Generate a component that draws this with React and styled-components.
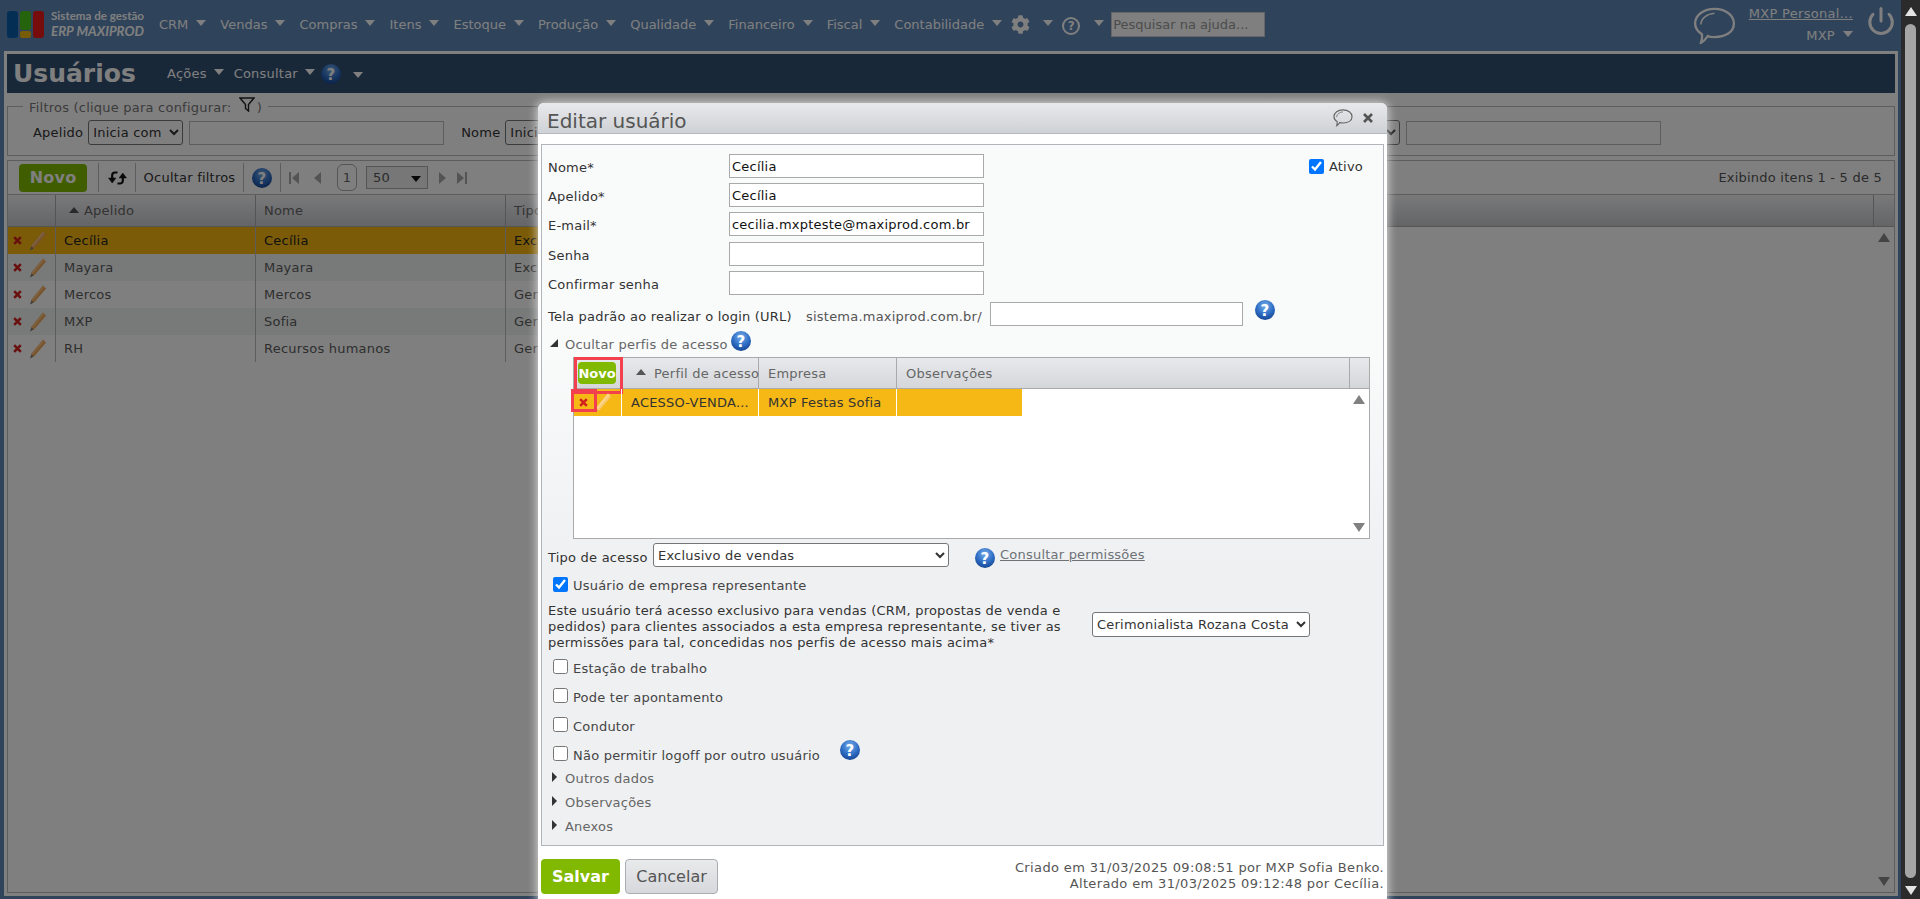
import React, { useId } from "react"
import styled, { createGlobalStyle } from "styled-components"
import { FaCog } from "react-icons/fa"
import { Power } from "lucide-react"

const GlobalStyle = createGlobalStyle`
   html, body {
      margin: 0;
      height: 100%;
      overflow: hidden;
   }
   body, input, select, button {
      font-family: "DejaVu Sans", Verdana, sans-serif;
      font-size: 13px;
      letter-spacing: inherit;
   }
   * {
      box-sizing: border-box;
   }
`

function HelpIcon() {
   const id = useId()
   return (
      <svg width="20" height="20" viewBox="0 0 20 20">
         <defs>
            <radialGradient id={id} cx="50%" cy="30%" r="75%">
               <stop offset="0%" stopColor="#79aeea" />
               <stop offset="55%" stopColor="#2f6fc6" />
               <stop offset="100%" stopColor="#123f8c" />
            </radialGradient>
         </defs>
         <circle cx="10" cy="10" r="10" fill={`url(#${id})`} />
         <text x="10" y="15.5" fontSize="15" fontWeight="bold" textAnchor="middle" fill="#fff" fontFamily="DejaVu Sans">?</text>
      </svg>
   )
}

function Pencil({ faded }) {
   return (
      <svg width="18" height="22" viewBox="0 0 18 22">
         <path d="M14 1.5 L17 4.5 L5.5 18 L2 19.5 L2.5 15.5 Z" fill={faded ? "#f9c870" : "#f0a552"} />
         <path d="M14 1.5 L15.5 3 L4 17 L2.5 15.5 Z" fill={faded ? "#fbd68a" : "#f6c084"} />
         <path d="M2.4 16.5 L4.600 18.4 L1 20.5 Z" fill={faded ? "#d9b25a" : "#777"} />
      </svg>
   )
}

function Cross() {
   return (
      <svg width="9" height="9" viewBox="0 0 9 9">
         <path d="M1.2 1.2 L7.8 7.8 M7.8 1.2 L1.2 7.8" stroke="#d2201f" strokeWidth="2.6" />
      </svg>
   )
}

function Refresh() {
   return (
      <svg width="19" height="16" viewBox="0 0 19 16" fill="none" stroke="#111" strokeWidth="2.2">
         <path d="M9.500 2.500 H7 A2.800 2.800 0 0 0 4.200 5.300 V10" />
         <path d="M0.500 8 L4.200 13 L7.900 8 Z" fill="#111" strokeWidth="0.5" />
         <path d="M9.500 13.500 H12 A2.800 2.800 0 0 0 14.800 10.700 V6" />
         <path d="M11.100 8 L14.800 3 L18.500 8 Z" fill="#111" strokeWidth="0.5" />
      </svg>
   )
}

function Funnel() {
   return (
      <svg width="16" height="15" viewBox="0 0 16 15" fill="none" stroke="#222" strokeWidth="1.4">
         <path d="M1 1 H15 L9.500 7.500 V14 L6.500 11.500 V7.500 Z" />
      </svg>
   )
}

function Bubble({ size, color, sw }) {
   return (
      <svg width={size} height={size * 0.88} viewBox="0 0 44 39" fill="none" stroke={color} strokeWidth={sw}>
         <path d="M22 2 C33 2 42 8 42 17 C42 26 33 31 22 31 C19 31 17 31 15 30 C13 33 10 36 8 37 C9 34 9.500 31 9 28 C4.500 25 2 21 2 17 C2 8 11 2 22 2 Z" />
         <path d="M8 18 C8 12 14 7 22 6.500" strokeWidth={sw * 0.7} />
      </svg>
   )
}

function MainGridRow({ apelido, nome, tipo, selected, alt }) {
   return (
      <MainRow $selected={selected} $alt={alt}>
         <ActionCell>
            <Cross />
            <Pencil />
         </ActionCell>
         <MainCell>{apelido}</MainCell>
         <MainCell>{nome}</MainCell>
         <MainCell>{tipo}</MainCell>
      </MainRow>
   )
}

function CheckRow({ label, checked, help }) {
   return (
      <CheckLine>
         <input type="checkbox" defaultChecked={checked} />
         <span>{label}</span>
         {help && (
            <RowHelp>
               <HelpIcon />
            </RowHelp>
         )}
      </CheckLine>
   )
}

const navItems = ["CRM", "Vendas", "Compras", "Itens", "Estoque", "Produção", "Qualidade", "Financeiro", "Fiscal", "Contabilidade"]

export default function App() {
   return (
      <Page>
         <GlobalStyle />
         <Main>
            <TopNav>
               <Logo>
                  <LogoMark>
                     <LogoBar $color="#0b5cab" />
                     <LogoStack>
                        <LogoBar $color="#4cc71a" />
                        <LogoFoot />
                     </LogoStack>
                     <LogoBar $color="#ee1818" />
                  </LogoMark>
                  <LogoText>
                     <strong>Sistema de gestão</strong>
                     <em>ERP MAXIPROD</em>
                  </LogoText>
               </Logo>
               <NavMenu>
                  {navItems.map((item) => (
                     <NavItem key={item}>
                        {item}
                        <Caret />
                     </NavItem>
                  ))}
               </NavMenu>
               <NavIcons>
                  <FaCog size={19} color="#fff" />
                  <Caret />
                  <HelpOutline>?</HelpOutline>
                  <Caret />
               </NavIcons>
               <SearchBox defaultValue="Pesquisar na ajuda..." />
               <UserArea>
                  <Bubble size={43} color="#fff" sw={2.4} />
                  <UserBox>
                     <UserLink>MXP Personal...</UserLink>
                     <UserCompany>
                        MXP
                        <Caret />
                     </UserCompany>
                  </UserBox>
                  <PowerSlot>
                     <Power size={30} color="#fff" strokeWidth={2.4} />
                  </PowerSlot>
               </UserArea>
            </TopNav>

            <Frame>
               <TitleBar>
                  <Title>Usuários</Title>
                  <TitleMenu>
                     Ações
                     <Caret />
                  </TitleMenu>
                  <TitleMenu>
                     Consultar
                     <Caret />
                  </TitleMenu>
                  <HelpIcon />
                  <TitleCaret>
                     <Caret />
                  </TitleCaret>
               </TitleBar>

               <Filters>
                  <FilterLegend>
                     Filtros (clique para configurar: <Funnel />)
                  </FilterLegend>
                  <FilterGroup>
                     <FilterLabel>Apelido</FilterLabel>
                     <FilterSelect defaultValue="Inicia com">
                        <option>Inicia com</option>
                     </FilterSelect>
                     <FilterInput />
                  </FilterGroup>
                  <FilterGroup $offset={17}>
                     <FilterLabel>Nome</FilterLabel>
                     <FilterSelect defaultValue="Inicia com">
                        <option>Inicia com</option>
                     </FilterSelect>
                     <FilterInput />
                  </FilterGroup>
                  <FilterGroup $offset={444}>
                     <FilterSelect defaultValue="Inicia com">
                        <option>Inicia com</option>
                     </FilterSelect>
                     <FilterInput />
                  </FilterGroup>
               </Filters>

               <Toolbar>
                  <NewButton>Novo</NewButton>
                  <ToolCell $width={37}>
                     <Refresh />
                  </ToolCell>
                  <ToolCell $width={108}>Ocultar filtros</ToolCell>
                  <ToolCell $width={37}>
                     <HelpIcon />
                  </ToolCell>
                  <Pager>
                     <PagerIcon viewBox="0 0 10 12">
                        <path d="M0 0 H2 V12 H0 Z M10 0 V12 L3 6 Z" />
                     </PagerIcon>
                     <PagerIcon viewBox="0 0 10 12">
                        <path d="M8 0 V12 L1 6 Z" />
                     </PagerIcon>
                     <PageBox>1</PageBox>
                     <PageSize>
                        50
                        <PageSizeCaret />
                     </PageSize>
                     <PagerIcon $tight viewBox="0 0 10 12">
                        <path d="M2 0 V12 L9 6 Z" />
                     </PagerIcon>
                     <PagerIcon viewBox="0 0 10 12">
                        <path d="M0 0 V12 L7 6 Z M8 0 H10 V12 H8 Z" />
                     </PagerIcon>
                  </Pager>
                  <ItemCount>Exibindo itens 1 - 5 de 5</ItemCount>
               </Toolbar>

               <MainGrid>
                  <MainHeader>
                     <HeaderCell />
                     <HeaderCell $sorted>
                        <SortUp />
                        Apelido
                     </HeaderCell>
                     <HeaderCell>Nome</HeaderCell>
                     <HeaderCell>Tipo de acesso</HeaderCell>
                     <HeaderCell />
                  </MainHeader>
                  <MainBody>
                     <MainRows>
                        <MainGridRow apelido="Cecília" nome="Cecília" tipo="Exclusivo de vendas" selected />
                        <MainGridRow apelido="Mayara" nome="Mayara" tipo="Exclusivo de vendas" alt />
                        <MainGridRow apelido="Mercos" nome="Mercos" tipo="Gerente" />
                        <MainGridRow apelido="MXP" nome="Sofia" tipo="Gerente" alt />
                        <MainGridRow apelido="RH" nome="Recursos humanos" tipo="Gerente" />
                     </MainRows>
                     <ScrollTrack>
                        <ArrowUp $color="#888" />
                        <ArrowDown $color="#888" />
                     </ScrollTrack>
                  </MainBody>
               </MainGrid>
            </Frame>
            <Overlay />
         </Main>

         <Scrollbar>
            <ArrowUp $color="#e4e4e4" />
            <Thumb />
            <ArrowDown $color="#e4e4e4" />
         </Scrollbar>

         <Modal>
            <ModalHeader>
               <ModalTitle>Editar usuário</ModalTitle>
               <ModalTools>
                  <Bubble size={20} color="#666" sw={2.6} />
                  <CloseGlyph viewBox="0 0 10 10">
                     <path d="M1 1 L9 9 M9 1 L1 9" />
                  </CloseGlyph>
               </ModalTools>
            </ModalHeader>

            <Panel>
               <FieldRow>
                  <FieldLabel>Nome*</FieldLabel>
                  <TextInput defaultValue="Cecília" />
                  <ActiveCheck>
                     <input type="checkbox" defaultChecked />
                     Ativo
                  </ActiveCheck>
               </FieldRow>
               <FieldRow>
                  <FieldLabel>Apelido*</FieldLabel>
                  <TextInput defaultValue="Cecília" />
               </FieldRow>
               <FieldRow $wide>
                  <FieldLabel>E-mail*</FieldLabel>
                  <TextInput defaultValue="cecilia.mxpteste@maxiprod.com.br" />
               </FieldRow>
               <FieldRow>
                  <FieldLabel>Senha</FieldLabel>
                  <TextInput />
               </FieldRow>
               <FieldRow>
                  <FieldLabel>Confirmar senha</FieldLabel>
                  <TextInput />
               </FieldRow>

               <UrlRow>
                  <UrlLabel>Tela padrão ao realizar o login (URL)</UrlLabel>
                  <UrlPrefix>sistema.maxiprod.com.br/</UrlPrefix>
                  <UrlInput />
                  <UrlHelp>
                     <HelpIcon />
                  </UrlHelp>
               </UrlRow>

               <SectionToggle>
                  <OpenTriangle />
                  <span>Ocultar perfis de acesso</span>
                  <SectionHelp>
                     <HelpIcon />
                  </SectionHelp>
               </SectionToggle>

               <SubGrid>
                  <SubHeader>
                     <SubHeaderCell>
                        <SmallNew>Novo</SmallNew>
                        <RedMark $left={0} $top={-1} $width={49} $height={37} />
                     </SubHeaderCell>
                     <SubHeaderCell $pad={14}>
                        <SortUp />
                        Perfil de acesso
                     </SubHeaderCell>
                     <SubHeaderCell $pad={9}>Empresa</SubHeaderCell>
                     <SubHeaderCell $pad={9}>Observações</SubHeaderCell>
                     <SubHeaderCell />
                  </SubHeader>
                  <SubBody>
                     <SubRows>
                        <SubRow>
                           <SubAction>
                              <Cross />
                              <Pencil faded />
                              <RedMark $left={-3} $top={0} $width={26} $height={23} />
                           </SubAction>
                           <SubCell>ACESSO-VENDA...</SubCell>
                           <SubCell>MXP Festas Sofia</SubCell>
                           <SubCell />
                        </SubRow>
                     </SubRows>
                     <ScrollTrack>
                        <ArrowUp $color="#808080" />
                        <ArrowDown $color="#808080" />
                     </ScrollTrack>
                  </SubBody>
               </SubGrid>

               <TipoRow>
                  <TipoLabel>Tipo de acesso</TipoLabel>
                  <TipoSelect defaultValue="Exclusivo de vendas">
                     <option>Exclusivo de vendas</option>
                  </TipoSelect>
                  <TipoHelp>
                     <HelpIcon />
                  </TipoHelp>
                  <PermLink>Consultar permissões</PermLink>
               </TipoRow>

               <RepresentRow>
                  <input type="checkbox" defaultChecked />
                  <span>Usuário de empresa representante</span>
               </RepresentRow>

               <RepresentBlock>
                  <RepresentText>
                     Este usuário terá acesso exclusivo para vendas (CRM, propostas de venda e pedidos) para clientes associados a esta empresa representante, se tiver as permissões para tal, concedidas nos perfis de acesso mais acima*
                  </RepresentText>
                  <RepresentSelect defaultValue="Cerimonialista Rozana Costa">
                     <option>Cerimonialista Rozana Costa</option>
                  </RepresentSelect>
               </RepresentBlock>

               <CheckList>
                  <CheckRow label="Estação de trabalho" />
                  <CheckRow label="Pode ter apontamento" />
                  <CheckRow label="Condutor" />
                  <CheckRow label="Não permitir logoff por outro usuário" help />
               </CheckList>

               <Collapsed>
                  <ClosedTriangle />
                  Outros dados
               </Collapsed>
               <Collapsed>
                  <ClosedTriangle />
                  Observações
               </Collapsed>
               <Collapsed>
                  <ClosedTriangle />
                  Anexos
               </Collapsed>
            </Panel>

            <ModalFooter>
               <SaveButton>Salvar</SaveButton>
               <CancelButton>Cancelar</CancelButton>
               <AuditText>
                  Criado em 31/03/2025 09:08:51 por MXP Sofia Benko.
                  <br />
                  Alterado em 31/03/2025 09:12:48 por Cecília.
               </AuditText>
            </ModalFooter>
         </Modal>
      </Page>
   )
}

const Page = styled.div`
   position: relative;
   display: flex;
   width: 100%;
   height: 899px;
   overflow: hidden;
   color: #333;
`
const Main = styled.div`
   position: relative;
   flex: 1;
   background: #5e86b6;
`
const Overlay = styled.div`
   position: absolute;
   inset: 0;
   background: rgba(0, 0, 0, 0.5);
`

/* top navigation */
const TopNav = styled.div`
   display: flex;
   align-items: center;
   height: 51px;
   padding: 0 0 2px 7px;
   color: #fff;
`
const Logo = styled.div`
   display: flex;
   align-items: center;
   gap: 7px;
   width: 152px;
`
const LogoMark = styled.div`
   display: flex;
   gap: 2px;
   height: 27px;
`
const LogoBar = styled.div`
   flex: 1;
   width: 11px;
   border-radius: 3px;
   background: ${(p) => p.$color};
`
const LogoStack = styled.div`
   display: flex;
   flex-direction: column;
   gap: 1px;
`
const LogoFoot = styled.div`
   height: 7px;
   border-radius: 2px;
   background: #f2b90f;
`
const LogoText = styled.div`
   display: flex;
   flex-direction: column;
   gap: 2px;
   margin-top: -3px;
   font-family: Lato, sans-serif;
   white-space: nowrap;
   strong {
      font-size: 11.6px;
      line-height: 13px;
   }
   em {
      font-size: 13.3px;
      line-height: 14px;
      font-weight: 700;
   }
`
const NavMenu = styled.div`
   display: flex;
   gap: 14px;
`
const NavItem = styled.div`
   display: flex;
   align-items: center;
   gap: 8px;
`
const Caret = styled.i`
   display: inline-block;
   width: 0;
   height: 0;
   margin-top: -4px;
   border-left: 5px solid transparent;
   border-right: 5px solid transparent;
   border-top: 6px solid currentColor;
`
const NavIcons = styled.div`
   display: flex;
   align-items: center;
   margin-left: 9px;
   gap: 13px;
   i {
      margin-right: -4px;
   }
   i:last-child {
      margin-left: 1px;
      margin-right: 0;
   }
`
const HelpOutline = styled.span`
   display: flex;
   align-items: center;
   justify-content: center;
   width: 18px;
   height: 18px;
   margin-top: 2px;
   border: 2px solid #fff;
   border-radius: 50%;
   font-size: 12px;
   font-weight: bold;
`
const SearchBox = styled.input`
   width: 154px;
   height: 25px;
   margin-left: 7px;
   padding: 0 1px;
   border: 1px solid #ccc;
   background: #fff;
   color: #999;
`
const UserArea = styled.div`
   display: flex;
   align-items: center;
   margin: 2px 5px 0 auto;
`
const UserBox = styled.div`
   display: flex;
   flex-direction: column;
   align-items: flex-end;
   gap: 7px;
   margin: -1px 13px 0;
   letter-spacing: 0.3px;
`
const UserLink = styled.a`
   text-decoration: underline;
   white-space: nowrap;
`
const UserCompany = styled.div`
   display: flex;
   align-items: center;
   gap: 8px;
`
const PowerSlot = styled.span`
   display: flex;
   margin-top: -9px;
`

/* page frame */
const Frame = styled.div`
   display: flex;
   flex-direction: column;
   height: 845px;
   margin: 0 3px 0 4px;
   padding: 3px;
   background: #fff;
   letter-spacing: 0.22px;
`
const TitleBar = styled.div`
   display: flex;
   flex: none;
   align-items: center;
   height: 39px;
   padding-left: 6px;
   background: #325072;
   color: #fff;
`
const Title = styled.h1`
   margin: 0 12px 0 0;
   width: 142px;
   font-size: 25px;
   font-weight: bold;
   letter-spacing: 0;
   color: #fff;
   white-space: nowrap;
`
const TitleMenu = styled.div`
   display: flex;
   align-items: center;
   gap: 7px;
   margin-right: 10px;
   &:nth-of-type(2) {
      margin-right: 6px;
   }
`
const TitleCaret = styled.span`
   margin-left: 12px;
`

/* filters */
const Filters = styled.fieldset`
   display: flex;
   flex: none;
   align-items: center;
   height: 56px;
   margin: 7px 0 0;
   padding: 8px 0 0 25px;
   border: 1px solid #bbb;
   min-inline-size: 0;
`
const FilterLegend = styled.legend`
   display: block;
   height: 12px;
   margin-left: -10px;
   padding: 0 6px;
   line-height: 16px;
   color: #777;
   svg {
      margin: -9px 2px 0 3px;
      vertical-align: middle;
   }
`
const FilterGroup = styled.div`
   display: flex;
   align-items: center;
   margin-left: ${(p) => p.$offset || 0}px;
`
const FilterLabel = styled.label`
   margin-right: 5px;
`
const FilterSelect = styled.select`
   width: 95px;
   height: 25px;
   margin-right: 6px;
   background: #fff;
   border: 1px solid #767676;
   border-radius: 3px;
   color: #333;
`
const FilterInput = styled.input`
   width: 255px;
   height: 24px;
   border: 1px solid #bbb;
   background: #fff;
`

/* toolbar */
const Toolbar = styled.div`
   display: flex;
   flex: none;
   align-items: center;
   height: 35px;
   margin-top: 4px;
   padding-left: 11px;
   border: 1px solid #bbb;
`
const NewButton = styled.button`
   width: 68px;
   height: 28px;
   margin-right: 11px;
   border: 0;
   border-radius: 4px;
   background: #80bb00;
   color: #fff;
   font-size: 16px;
   font-weight: bold;
`
const ToolCell = styled.div`
   display: flex;
   align-items: center;
   justify-content: center;
   width: ${(p) => p.$width}px;
   height: 29px;
   border-left: 1px solid #bbb;
   white-space: nowrap;
`
const Pager = styled.div`
   display: flex;
   align-items: center;
   height: 29px;
   padding-left: 8px;
   border-left: 1px solid #bbb;
   color: #aaa;
`
const PagerIcon = styled.svg`
   width: 10px;
   height: 12px;
   margin-right: ${(p) => (p.$tight ? 10 : 14)}px;
   fill: #a9a9a9;
`
const PageBox = styled.div`
   display: flex;
   align-items: center;
   justify-content: center;
   width: 20px;
   height: 27px;
   margin-right: 9px;
   border: 1px solid #aaa;
   border-radius: 6px;
   color: #666;
`
const PageSize = styled.div`
   display: flex;
   align-items: center;
   justify-content: space-between;
   width: 62px;
   height: 23px;
   margin-right: 9px;
   padding: 0 6px;
   border: 1px solid #aaa;
   background: #eee;
   color: #555;
`
const PageSizeCaret = styled.i`
   margin-top: 3px;
   border-left: 5px solid transparent;
   border-right: 5px solid transparent;
   border-top: 6px solid #111;
`
const ItemCount = styled.div`
   margin-left: auto;
   margin-right: 12px;
   color: #555;
`

/* main grid */
const MainGrid = styled.div`
   display: flex;
   flex: 1;
   flex-direction: column;
   border: 1px solid #bbb;
   border-top: 0;
`
const MainHeader = styled.div`
   display: grid;
   grid-template-columns: 48px 200px 250px 1fr 20px;
   flex: none;
   height: 32px;
   border-bottom: 1px solid #aaa;
   background: linear-gradient(#f2f3f5, #c9cace);
`
const HeaderCell = styled.div`
   display: flex;
   align-items: center;
   gap: 5px;
   padding-left: ${(p) => (p.$sorted ? 13 : 8)}px;
   border-right: 1px solid #aaa;
   color: #666;
   white-space: nowrap;
   &:last-child {
      border-right: 0;
   }
`
const SortUp = styled.i`
   margin-top: -2px;
   border-left: 5.5px solid transparent;
   border-right: 5.5px solid transparent;
   border-bottom: 6px solid #555;
`
const MainBody = styled.div`
   display: flex;
   flex: 1;
`
const MainRows = styled.div`
   flex: 1;
`
const MainRow = styled.div`
   display: grid;
   grid-template-columns: 48px 200px 250px 295px;
   width: 793px;
   height: 27px;
   color: ${(p) => (p.$selected ? "#222" : "#5c5c5c")};
   background: ${(p) => (p.$selected ? "#f6b70f" : p.$alt ? "#f1f4f4" : "transparent")};
`
const MainCell = styled.div`
   display: flex;
   align-items: center;
   padding-left: 8px;
   border-right: 1px solid #bbb;
   white-space: nowrap;
   overflow: hidden;
`
const ActionCell = styled(MainCell)`
   gap: 7px;
   padding-left: 5px;
`
const ScrollTrack = styled.div`
   display: flex;
   flex: none;
   flex-direction: column;
   align-items: center;
   justify-content: space-between;
   width: 20px;
   padding: 6px 0 6px 0;
`
const ArrowUp = styled.i`
   border-left: 6px solid transparent;
   border-right: 6px solid transparent;
   border-bottom: 9px solid ${(p) => p.$color};
`
const ArrowDown = styled.i`
   border-left: 6px solid transparent;
   border-right: 6px solid transparent;
   border-top: 9px solid ${(p) => p.$color};
`

/* browser scrollbar */
const Scrollbar = styled.div`
   display: flex;
   flex: none;
   flex-direction: column;
   align-items: center;
   gap: 8px;
   width: 19px;
   padding: 7px 0 4px;
   background: #2b2b2b;
`
const Thumb = styled.div`
   flex: 1;
   width: 11px;
   border-radius: 6px;
   background: #a5a5a5;
`

/* dialog */
const Modal = styled.div`
   position: absolute;
   left: 538px;
   top: 103px;
   width: 849px;
   height: 810px;
   border-radius: 6px 6px 0 0;
   background: #fff;
   box-shadow: 0 0 10px 1px rgba(255, 255, 255, 0.7);
   letter-spacing: 0.22px;
`
const ModalHeader = styled.div`
   display: flex;
   align-items: center;
   justify-content: space-between;
   height: 31px;
   padding: 5px 14px 0 9px;
   border-radius: 6px 6px 0 0;
   border-bottom: 1px solid #b4b8bc;
   background: linear-gradient(#e8e9ec, #ced1d5);
`
const ModalTitle = styled.div`
   font-size: 20px;
   letter-spacing: 0;
   color: #555;
`
const ModalTools = styled.div`
   display: flex;
   align-items: center;
   gap: 10px;
   margin-top: -5px;
`
const CloseGlyph = styled.svg`
   width: 10px;
   height: 10px;
   fill: none;
   stroke: #555;
   stroke-width: 2.6;
`
const Panel = styled.div`
   height: 702px;
   margin: 10px 3px 0;
   padding: 9px 6px 0;
   border: 1px solid #b0b5ba;
   background: linear-gradient(#f9fafa, #f9fafa 30%, #eff0f2 60%);
`
const FieldRow = styled.div`
   display: flex;
   align-items: center;
   height: 24px;
   margin-bottom: ${(p) => (p.$wide ? 6 : 5)}px;
`
const FieldLabel = styled.label`
   width: 181px;
   margin-top: 2px;
`
const TextInput = styled.input`
   width: 255px;
   height: 24px;
   padding: 0 2px;
   border: 1px solid #a9a9a9;
   background: #fff;
   color: #111;
`
const ActiveCheck = styled.label`
   display: flex;
   align-items: center;
   gap: 5px;
   margin-left: auto;
   margin-right: 14px;
   input {
      width: 15px;
      height: 15px;
      margin: 0;
   }
`
const UrlRow = styled.div`
   display: flex;
   align-items: center;
   height: 24px;
   margin-top: 7px;
`
const UrlLabel = styled.label`
   width: 258px;
   margin-top: 4px;
   white-space: nowrap;
`
const UrlPrefix = styled.span`
   width: 184px;
   margin-top: 4px;
   color: #555;
   white-space: nowrap;
`
const UrlInput = styled.input`
   width: 253px;
   height: 24px;
   border: 1px solid #a9a9a9;
   background: #fff;
`
const UrlHelp = styled.span`
   display: flex;
   margin: -8px 0 0 12px;
`
const SectionToggle = styled.div`
   display: flex;
   align-items: center;
   height: 24px;
   margin-top: 6px;
   color: #666;
`
const OpenTriangle = styled.i`
   width: 0;
   height: 0;
   margin: 0 7px 0 2px;
   border-bottom: 8px solid #333;
   border-left: 8px solid transparent;
   transform: translateY(-1px);
`
const SectionHelp = styled.span`
   display: flex;
   margin: -6px 0 0 3px;
`
const SubGrid = styled.div`
   display: flex;
   flex-direction: column;
   height: 182px;
   margin: 1px 7px 0 25px;
   border: 1px solid #aaa;
   background: #fff;
`
const SubHeader = styled.div`
   display: grid;
   grid-template-columns: 48px 137px 138px 1fr 19px;
   flex: none;
   height: 31px;
   border-bottom: 1px solid #aaa;
   background: linear-gradient(#e7e9ec, #d4d6da);
`
const SubHeaderCell = styled.div`
   position: relative;
   display: flex;
   align-items: center;
   gap: 8px;
   padding-left: ${(p) => p.$pad || 0}px;
   border-right: 1px solid #aaa;
   color: #666;
   white-space: nowrap;
   &:last-child {
      border-right: 0;
   }
`
const SmallNew = styled.button`
   width: 38px;
   height: 22px;
   margin-left: 4px;
   padding: 0;
   border: 0;
   border-radius: 4px;
   background: #80b900;
   color: #fff;
   font-size: 13px;
   font-weight: bold;
   letter-spacing: 0;
`
const RedMark = styled.span`
   position: absolute;
   left: ${(p) => p.$left}px;
   top: ${(p) => p.$top}px;
   width: ${(p) => p.$width}px;
   height: ${(p) => p.$height}px;
   border: 3px solid #f2404f;
`
const SubBody = styled.div`
   display: flex;
   flex: 1;
`
const SubRows = styled.div`
   flex: 1;
`
const SubRow = styled.div`
   display: grid;
   grid-template-columns: 48px 137px 138px 125px;
   width: 448px;
   height: 27px;
   background: #f5b814;
`
const SubCell = styled.div`
   display: flex;
   align-items: center;
   padding-left: 9px;
   border-right: 1px solid #fff;
   white-space: nowrap;
   overflow: hidden;
   &:last-child {
      border-right: 0;
   }
`
const SubAction = styled(SubCell)`
   position: relative;
   gap: 6px;
   padding-left: 5px;
   overflow: visible;
`
const TipoRow = styled.div`
   display: flex;
   align-items: center;
   height: 24px;
   margin-top: 4px;
`
const TipoLabel = styled.label`
   width: 105px;
   margin-top: 4px;
   white-space: nowrap;
`
const TipoSelect = styled.select`
   width: 296px;
   height: 24px;
   border: 1px solid #767676;
   border-radius: 3px;
   background: #fff;
   color: #333;
`
const TipoHelp = styled.span`
   display: flex;
   margin: 5px 0 0 26px;
`
const PermLink = styled.a`
   margin: -2px 0 0 5px;
   color: #6d7277;
   text-decoration: underline;
`
const RepresentRow = styled.label`
   display: flex;
   align-items: center;
   gap: 5px;
   height: 20px;
   margin-top: 8px;
   padding-left: 5px;
   color: #444;
   input {
      width: 15px;
      height: 15px;
      margin: -2px 0 0;
   }
`
const RepresentBlock = styled.div`
   display: flex;
   align-items: center;
   margin-top: 8px;
`
const RepresentText = styled.div`
   width: 544px;
   padding-right: 20px;
   line-height: 16px;
`
const RepresentSelect = styled.select`
   width: 218px;
   height: 25px;
   margin-top: -5px;
   border: 1px solid #767676;
   border-radius: 3px;
   background: #fff;
   color: #333;
`
const CheckList = styled.div`
   display: flex;
   flex-direction: column;
   gap: 7px;
   margin-top: 6px;
`
const CheckLine = styled.label`
   display: flex;
   align-items: center;
   gap: 5px;
   height: 22px;
   padding-left: 5px;
   color: #444;
   input {
      width: 15px;
      height: 15px;
      margin: -4px 0 0;
   }
`
const RowHelp = styled.span`
   display: flex;
   margin: -10px 0 0 15px;
`
const Collapsed = styled.div`
   display: flex;
   align-items: center;
   height: 24px;
   color: #666;
`
const ClosedTriangle = styled.i`
   width: 0;
   height: 0;
   margin: -2px 8px 0 4px;
   border-top: 5px solid transparent;
   border-bottom: 5px solid transparent;
   border-left: 5px solid #333;
`
const ModalFooter = styled.div`
   display: flex;
   align-items: flex-start;
   gap: 5px;
   margin: 13px 3px 0;
`
const SaveButton = styled.button`
   width: 79px;
   height: 35px;
   border: 0;
   border-radius: 4px;
   background: #80b900;
   color: #fff;
   font-size: 16px;
   font-weight: bold;
   letter-spacing: 0;
`
const CancelButton = styled.button`
   width: 93px;
   height: 35px;
   border: 1px solid #a9adb2;
   border-radius: 4px;
   background: linear-gradient(#e9eaec, #d6d8db);
   color: #555;
   font-size: 16px;
   letter-spacing: 0;
`
const AuditText = styled.div`
   margin: 1px 0 0 auto;
   line-height: 16px;
   letter-spacing: 0.36px;
   text-align: right;
   color: #555;
`
